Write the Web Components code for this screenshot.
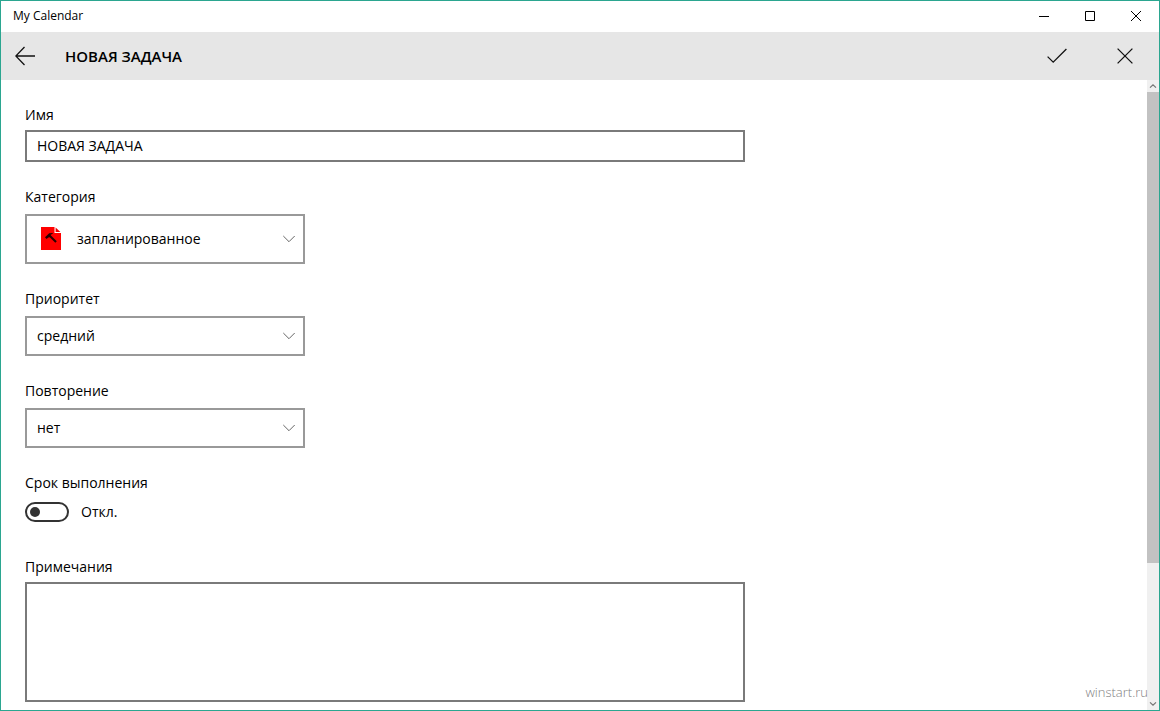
<!DOCTYPE html>
<html lang="ru">
<head>
<meta charset="utf-8">
<meta name="viewport" content="width=device-width, initial-scale=1">
<title>My Calendar</title>
<style>
  body {
    margin: 0;
    background: #fff;
    color: #000;
    font: 14px/22px 'Open Sans', 'Noto Sans', sans-serif;
  }
</style>
</head>
<body>
<calendar-window>
  <title-bar slot="title">My Calendar</title-bar>
  <command-bar slot="commands">НОВАЯ ЗАДАЧА</command-bar>
  <text-field label="Имя" value="НОВАЯ ЗАДАЧА"></text-field>
  <select-field label="Категория" options="запланированное,работа,личное" tall>
    <task-icon slot="icon"></task-icon>
  </select-field>
  <select-field label="Приоритет" options="средний,низкий,высокий"></select-field>
  <select-field label="Повторение" options="нет,ежедневно,еженедельно"></select-field>
  <toggle-field label="Срок выполнения"></toggle-field>
  <text-field label="Примечания" multiline></text-field>
  <span slot="watermark">winstart.ru</span>
</calendar-window>

<script>
class CalendarWindow extends HTMLElement {
  constructor() {
    super();
    this.attachShadow({ mode: 'open' });

    this.shadowRoot.innerHTML = `
      <style>
        :host {
          display: flex;
          flex-direction: column;
          position: relative;
          box-sizing: border-box;
          height: 100vh;
          border: 1px solid #2ba690;
          overflow: hidden;
        }

        .body {
          flex: 1;
          display: flex;
          min-height: 0;
        }

        form {
          flex: 1;
          min-width: 0;
          display: flex;
          flex-direction: column;
          gap: 24px;
          padding: 24px;
          overflow: hidden;
        }

        .watermark {
          position: absolute;
          right: 11px;
          bottom: 7px;
          color: #808080;
          font-size: 13px;
          font-weight: 300;
        }
      </style>
      <slot name="title"></slot>
      <slot name="commands"></slot>
      <div class="body">
        <form><slot></slot></form>
        <scroll-rail></scroll-rail>
      </div>
      <div class="watermark"><slot name="watermark"></slot></div>
    `;
  }
}

class TitleBar extends HTMLElement {
  constructor() {
    super();
    this.attachShadow({ mode: 'open' });

    this.shadowRoot.innerHTML = `
      <style>
        :host {
          display: flex;
          flex: none;
          align-items: center;
          height: 30px;
          padding: 0 0 1px 12px;
          font-size: 12px;
        }

        .title {
          flex: 1;
        }

        button {
          display: grid;
          place-items: center;
          width: 46px;
          height: 30px;
          padding: 0;
          border: 0;
          background: none;
        }

        svg {
          fill: none;
          stroke: #000;
        }
      </style>
      <span class="title"><slot></slot></span>
      <button aria-label="Свернуть"><svg width="10" height="10"><path d="M0 5.5h10" /></svg></button>
      <button aria-label="Развернуть"><svg width="10" height="10"><path d="M.5 .5h9v9h-9z" /></svg></button>
      <button aria-label="Закрыть"><svg width="10" height="10"><path d="M0 0l10 10M10 0L0 10" /></svg></button>
    `;
  }
}

class CommandBar extends HTMLElement {
  constructor() {
    super();
    this.attachShadow({ mode: 'open' });

    this.shadowRoot.innerHTML = `
      <style>
        :host {
          display: flex;
          flex: none;
          align-items: center;
          height: 48px;
          background: #e6e6e6;
        }

        h1 {
          flex: 1;
          margin: 0 0 0 16px;
          font-size: 15px;
          font-weight: 600;
        }

        button {
          display: grid;
          place-items: center;
          width: 68px;
          height: 48px;
          padding: 0;
          border: 0;
          background: none;
        }

        .back {
          width: 48px;
        }

        svg {
          fill: none;
          stroke: #111;
          stroke-width: 1.3;
        }
      </style>
      <button class="back" aria-label="Назад">
        <svg width="20" height="20"><path d="M20 10H1M9.5 1L.8 10l8.700 9" /></svg>
      </button>
      <h1><slot></slot></h1>
      <button aria-label="Сохранить">
        <svg width="20" height="16"><path d="M.6 8.600l5.600 5.600L19.400 1" /></svg>
      </button>
      <button aria-label="Отмена">
        <svg width="16" height="16"><path d="M.6 .6l14.800 14.800M15.400 .6L.6 15.400" /></svg>
      </button>
    `;
  }
}

class ScrollRail extends HTMLElement {
  constructor() {
    super();
    this.attachShadow({ mode: 'open' });

    this.shadowRoot.innerHTML = `
      <style>
        :host {
          display: flex;
          flex-direction: column;
          flex: none;
          width: 12px;
          background: #f0f0f0;
        }

        button {
          display: grid;
          place-items: center;
          height: 12px;
          padding: 0;
          border: 0;
          background: none;
        }

        svg {
          fill: none;
          stroke: #777;
          stroke-width: 1.2;
        }

        .thumb {
          flex: 7;
          background: #c2c2c2;
        }

        .rest {
          flex: 2;
        }
      </style>
      <button type="button" aria-label="Вверх"><svg width="8" height="4"><path d="M1 3.600L4 .8l3 2.800" /></svg></button>
      <div class="thumb"></div>
      <div class="rest"></div>
      <button type="button" aria-label="Вниз"><svg width="8" height="4"><path d="M1 .4l3 2.800L7 .4" /></svg></button>
    `;
  }
}

// Red sheet with a folded corner and a hammer
class TaskIcon extends HTMLElement {
  constructor() {
    super();
    this.attachShadow({ mode: 'open' });

    this.shadowRoot.innerHTML = `
      <style>
        :host {
          display: block;
          width: 20px;
          height: 24px;
        }

        svg {
          display: block;
        }
      </style>
      <svg width="20" height="24" viewBox="0 0 20 24">
        <path fill="#f00" d="M0 0H13.500V6H20V23H0z" />
        <path fill="#e00" d="M14.600 .6V5H19.400z" />
        <path fill="#2a0000" d="M4 10.300L8.200 6.300l3.400-.3.200.8-2.200 1 .6.900L15.800 14.300l-1.500 1.500L8.700 10.200l-1.300.4-1.900 1.400z" />
      </svg>
    `;
  }
}

class TextField extends HTMLElement {
  constructor() {
    super();
    this.attachShadow({ mode: 'open' });
  }

  connectedCallback() {
    const multiline = this.hasAttribute('multiline');

    this.shadowRoot.innerHTML = `
      <style>
        :host {
          display: flex;
          flex-direction: column;
          gap: 4px;
          max-width: 720px;
        }

        input,
        textarea {
          display: block;
          box-sizing: border-box;
          width: 100%;
          height: 32px;
          margin: 0;
          padding: 0 10px 2px;
          border: 2px solid #7a7a7a;
          border-radius: 0;
          outline: 0;
          background: #fff;
          color: inherit;
          font: inherit;
        }

        textarea {
          height: 120px;
          padding: 4px 10px;
          resize: none;
        }
      </style>
      <label for="control"></label>
      ${multiline ? '<textarea id="control"></textarea>' : '<input id="control" type="text">'}
    `;

    this.shadowRoot.querySelector('label').textContent = this.getAttribute('label');
    this.shadowRoot.querySelector('#control').value = this.getAttribute('value') || '';
  }
}

class SelectField extends HTMLElement {
  constructor() {
    super();
    this.attachShadow({ mode: 'open' });
  }

  connectedCallback() {
    this.shadowRoot.innerHTML = `
      <style>
        :host {
          display: flex;
          flex-direction: column;
          gap: 6px;
          max-width: 280px;
        }

        .box {
          display: grid;
          align-items: center;
          height: 40px;
        }

        :host([tall]) .box {
          height: 50px;
        }

        .box > * {
          grid-area: 1 / 1;
        }

        select {
          box-sizing: border-box;
          width: 100%;
          height: 100%;
          margin: 0;
          padding: 0 32px 0 10px;
          appearance: none;
          border: 2px solid #999;
          border-radius: 0;
          outline: 0;
          background: #fff;
          color: inherit;
          font: inherit;
        }

        :host([tall]) select {
          padding-left: 50px;
        }

        slot {
          display: block;
          margin-left: 16px;
          pointer-events: none;
        }

        svg {
          justify-self: end;
          margin-right: 10px;
          fill: none;
          stroke: #666;
          pointer-events: none;
        }
      </style>
      <label for="control"></label>
      <div class="box">
        <select id="control"></select>
        <slot name="icon"></slot>
        <svg width="12" height="8"><path d="M.3 1L6 6.700 11.700 1" /></svg>
      </div>
    `;

    this.shadowRoot.querySelector('label').textContent = this.getAttribute('label');

    const select = this.shadowRoot.querySelector('select');
    this.getAttribute('options').split(',').forEach(name => select.add(new Option(name)));
  }
}

class ToggleField extends HTMLElement {
  constructor() {
    super();
    this.attachShadow({ mode: 'open' });
    this._onChange = this._onChange.bind(this);
  }

  connectedCallback() {
    this.shadowRoot.innerHTML = `
      <style>
        :host {
          display: block;
          padding-bottom: 2px;
        }

        label {
          display: block;
        }

        .row {
          display: flex;
          align-items: center;
          gap: 12px;
          height: 36px;
        }

        input {
          display: flex;
          align-items: center;
          box-sizing: border-box;
          width: 44px;
          height: 20px;
          margin: 0;
          padding: 0 3px;
          appearance: none;
          border: 2px solid #333;
          border-radius: 10px;
        }

        input::before {
          content: '';
          width: 10px;
          height: 10px;
          border-radius: 50%;
          background: #333;
        }

        input:checked {
          justify-content: flex-end;
          border-color: #2ba690;
          background: #2ba690;
        }

        input:checked::before {
          background: #fff;
        }
      </style>
      <label for="control"></label>
      <div class="row">
        <input id="control" type="checkbox" role="switch">
        <span class="state">Откл.</span>
      </div>
    `;

    this.shadowRoot.querySelector('label').textContent = this.getAttribute('label');
    this.shadowRoot.querySelector('input').addEventListener('change', this._onChange);
  }

  _onChange(event) {
    this.shadowRoot.querySelector('.state').textContent = event.target.checked ? 'Вкл.' : 'Откл.';
  }
}

customElements.define('scroll-rail', ScrollRail);
customElements.define('task-icon', TaskIcon);
customElements.define('title-bar', TitleBar);
customElements.define('command-bar', CommandBar);
customElements.define('text-field', TextField);
customElements.define('select-field', SelectField);
customElements.define('toggle-field', ToggleField);
customElements.define('calendar-window', CalendarWindow);
</script>
</body>
</html>
